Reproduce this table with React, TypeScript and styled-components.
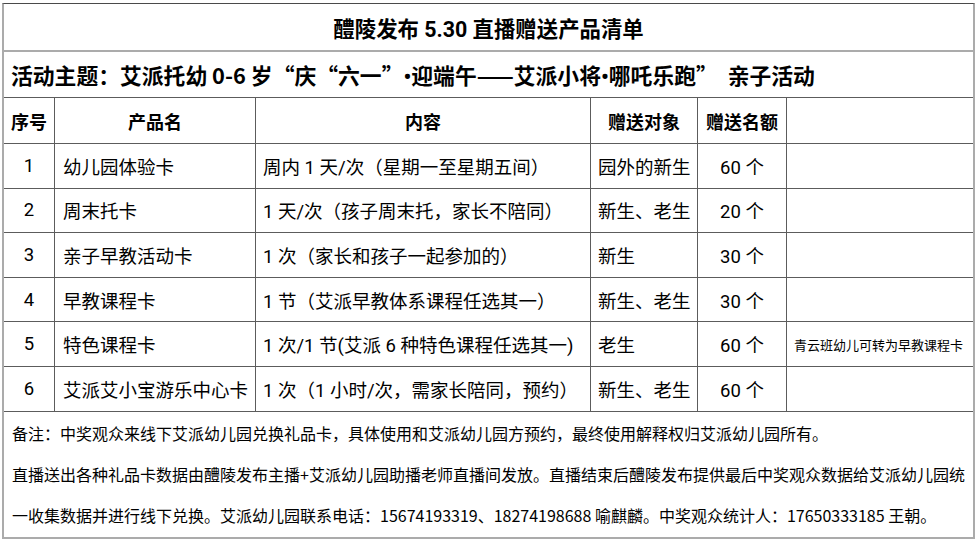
import React from "react";
import styled, { createGlobalStyle } from "styled-components";

const GlobalStyle = createGlobalStyle`
    body {
        margin: 0;
        background: #ffffff;
        font-family: "Noto Sans CJK SC", "Open Sans", sans-serif;
        color: #000000;
    }
`;

const latin = `Roboto, "Noto Sans CJK SC", sans-serif`;

const Sheet = styled.table`
    box-sizing: border-box;
    width: 973px;
    margin: 3px 0 0 2px;
    border-collapse: separate;
    border-spacing: 0;
    table-layout: fixed;
    border-top: 1px solid #4a4a4a;
    border-left: 2px solid #ababab;
    border-right: 2px solid #ababab;
    border-bottom: 2px solid #ababab;
`;

const Cell = styled.td<{ $align?: string; $bold?: boolean; $last?: boolean; $size?: number }>`
    box-sizing: border-box;
    padding: 0 7px;
    border-right: ${(p) => (p.$last ? "none" : "1px solid #5c5c5c")};
    border-bottom: 1px solid #5c5c5c;
    text-align: ${(p) => p.$align || "left"};
    font-family: ${latin};
    font-size: ${(p) => p.$size || 18.5}px;
    font-weight: ${(p) => (p.$bold ? 700 : 400)};
    white-space: nowrap;
    vertical-align: middle;
`;

const HeadCell = styled(Cell)`
    font-size: 18px;
`;

const NameCell = styled(Cell)`
    padding-left: 8px;
`;

const TitleCell = styled.td`
    box-sizing: border-box;
    height: 48px;
    text-align: center;
    font-family: ${latin};
    font-size: 21.4px;
    font-weight: 700;
    border-bottom: 2px solid #ababab;
`;

const ThemeCell = styled.td`
    box-sizing: border-box;
    height: 46px;
    padding-left: 7px;
    font-size: 21.8px;
    font-weight: 700;
    white-space: pre;
    border-bottom: 1px solid #5c5c5c;
`;

const Dot = styled.span`
    font-family: Roboto, sans-serif;
`;

const HeadRow = styled.tr`
    height: 46px;
`;

const DataRow = styled.tr`
    height: 44.6px;
`;

const NotesCell = styled.td`
    box-sizing: border-box;
    padding: 1px 4px 1px 8px;
    font-size: 16px;
    line-height: 41px;
`;

const Note = styled.p`
    margin: 0;
`;

type Gift = {
    no: number;
    name: string;
    content: string;
    target: string;
    count: string;
    remark?: string;
};

const gifts: Gift[] = [
    { no: 1, name: "幼儿园体验卡", content: "周内 1 天/次（星期一至星期五间）", target: "园外的新生", count: "60 个" },
    { no: 2, name: "周末托卡", content: "1 天/次（孩子周末托，家长不陪同）", target: "新生、老生", count: "20 个" },
    { no: 3, name: "亲子早教活动卡", content: "1 次（家长和孩子一起参加的）", target: "新生", count: "30 个" },
    { no: 4, name: "早教课程卡", content: "1 节（艾派早教体系课程任选其一）", target: "新生、老生", count: "30 个" },
    { no: 5, name: "特色课程卡", content: "1 次/1 节(艾派 6 种特色课程任选其一)", target: "老生", count: "60 个", remark: "青云班幼儿可转为早教课程卡" },
    { no: 6, name: "艾派艾小宝游乐中心卡", content: "1 次（1 小时/次，需家长陪同，预约）", target: "新生、老生", count: "60 个" },
];

const columns = [51, 201, 335, 107, 89, 186];

const GiftRow = ({ gift }: { gift: Gift }) => (
    <DataRow>
        <Cell $align="center">{gift.no}</Cell>
        <NameCell>{gift.name}</NameCell>
        <Cell>{gift.content}</Cell>
        <Cell>{gift.target}</Cell>
        <Cell $align="center">{gift.count}</Cell>
        <Cell $last $size={13}>{gift.remark}</Cell>
    </DataRow>
);

const App = () => {
    return (
        <>
            <GlobalStyle />
            <Sheet>
                <colgroup>
                    {columns.map((w, i) => (
                        <col key={i} style={{ width: w }} />
                    ))}
                </colgroup>
                <tbody>
                    {/* Title */}
                    <tr>
                        <TitleCell colSpan={6}>醴陵发布 5.30 直播赠送产品清单</TitleCell>
                    </tr>
                    <tr>
                        <ThemeCell colSpan={6}>
                            活动主题：艾派托幼 0-6 岁“庆“六一”<Dot>•</Dot>迎端午——艾派小将<Dot>•</Dot>哪吒乐跑”  亲子活动
                        </ThemeCell>
                    </tr>

                    {/* Header */}
                    <HeadRow>
                        <HeadCell $align="center" $bold>序号</HeadCell>
                        <HeadCell $align="center" $bold>产品名</HeadCell>
                        <HeadCell $align="center" $bold>内容</HeadCell>
                        <HeadCell $align="center" $bold>赠送对象</HeadCell>
                        <HeadCell $align="center" $bold>赠送名额</HeadCell>
                        <HeadCell $last></HeadCell>
                    </HeadRow>

                    {gifts.map((gift) => (
                        <GiftRow key={gift.no} gift={gift} />
                    ))}

                    {/* Notes */}
                    <tr>
                        <NotesCell colSpan={6}>
                            <Note>备注：中奖观众来线下艾派幼儿园兑换礼品卡，具体使用和艾派幼儿园方预约，最终使用解释权归艾派幼儿园所有。</Note>
                            <Note>
                                直播送出各种礼品卡数据由醴陵发布主播+艾派幼儿园助播老师直播间发放。直播结束后醴陵发布提供最后中奖观众数据给艾派幼儿园统一收集数据并进行线下兑换。艾派幼儿园联系电话：15674193319、18274198688 喻麒麟。中奖观众统计人：17650333185 王朝。
                            </Note>
                        </NotesCell>
                    </tr>
                </tbody>
            </Sheet>
        </>
    );
};

export default App;
